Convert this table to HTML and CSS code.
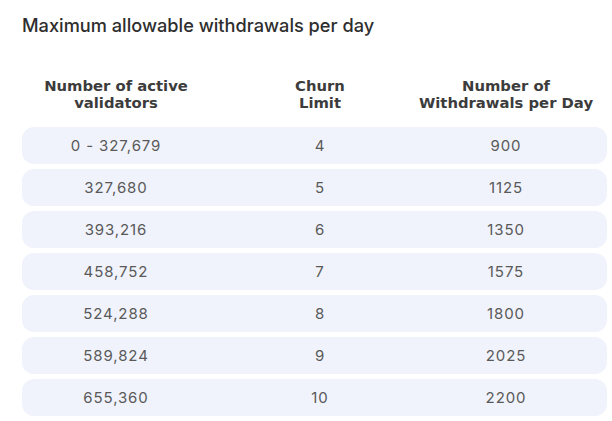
FILE: index.html
```html
<!DOCTYPE html>
<html>
<head>
<meta charset="utf-8">
<link rel="stylesheet" href="styles.css">
</head>
<body>
<div class="page">
  <h1 class="title">Maximum allowable withdrawals per day</h1>
  <div class="table">
    <div class="row head">
      <div class="cell">Number of active<br>validators</div>
      <div class="cell">Churn<br>Limit</div>
      <div class="cell">Number of<br>Withdrawals per Day</div>
    </div>
    <div class="row body"><div class="cell">0 - 327,679</div><div class="cell">4</div><div class="cell">900</div></div>
    <div class="row body"><div class="cell">327,680</div><div class="cell">5</div><div class="cell">1125</div></div>
    <div class="row body"><div class="cell">393,216</div><div class="cell">6</div><div class="cell">1350</div></div>
    <div class="row body"><div class="cell">458,752</div><div class="cell">7</div><div class="cell">1575</div></div>
    <div class="row body"><div class="cell">524,288</div><div class="cell">8</div><div class="cell">1800</div></div>
    <div class="row body"><div class="cell">589,824</div><div class="cell">9</div><div class="cell">2025</div></div>
    <div class="row body"><div class="cell">655,360</div><div class="cell">10</div><div class="cell">2200</div></div>
  </div>
</div>
</body>
</html>
```

FILE: styles.css
```css
html, body {
  margin: 0;
  padding: 0;
  background: #ffffff;
}

.page {
  padding: 14px 5px 0 22px;
  font-family: Inter, "Noto Sans", sans-serif;
}

.title {
  margin: 0;
  font-size: 18.2px;
  line-height: 22px;
  font-weight: 500;
  color: #2e2e2e;
  letter-spacing: 0;
}

.table {
  margin-top: 42px;
  display: flex;
  flex-direction: column;
  gap: 5px;
}

.row {
  display: grid;
  grid-template-columns: 188px 220px 152px 1fr;
  align-items: center;
  justify-items: center;
  text-align: center;
}

.cell {
  white-space: nowrap;
}

.head {
  font-family: "DejaVu Sans", "Liberation Sans", sans-serif;
  font-weight: 700;
  font-size: 14.8px;
  line-height: 16.6px;
  letter-spacing: 0;
  color: #3c3c3c;
  margin-bottom: 11px;
}

.body {
  height: 37px;
  background: #f0f3fb;
  border-radius: 12px;
  font-size: 15px;
  letter-spacing: 0.9px;
  color: #595959;
}
```
